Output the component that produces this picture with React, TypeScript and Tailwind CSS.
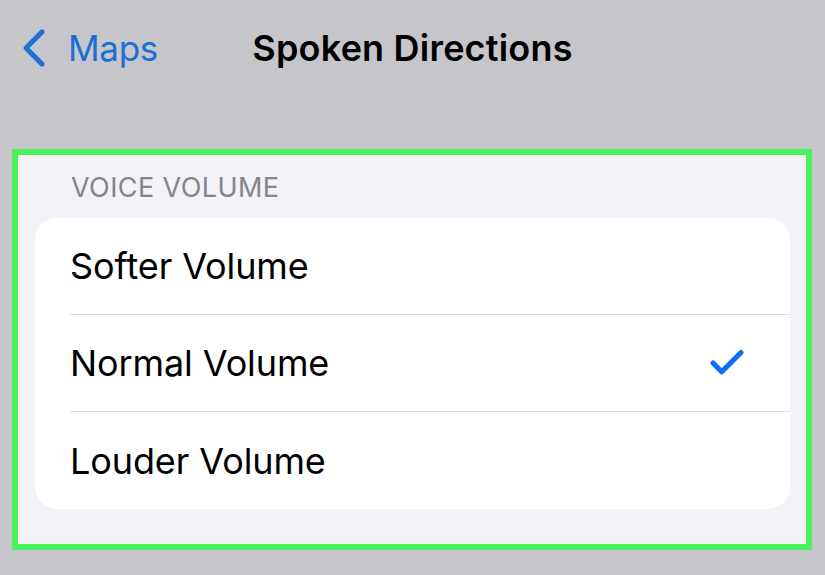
import { Check } from "lucide-react"

const options = [
  { id: "softer", label: "Softer Volume", selected: false },
  { id: "normal", label: "Normal Volume", selected: true },
  { id: "louder", label: "Louder Volume", selected: false },
]

export default function App() {
  return (
    <div
      className="w-[825px] h-[575px] bg-[#c6c5ca] overflow-hidden"
      style={{ fontFamily: "Inter, 'Noto Sans', sans-serif" }}
    >
      {/* nav bar */}
      <div className="relative h-[96px] flex items-center">
        <div className="flex items-center pl-[18px] text-[#1b6fd6]">
          <svg width="30" height="42" viewBox="0 0 30 42" fill="none">
            <path d="M24 5 L8 21 L24 37" stroke="currentColor" strokeWidth="5" strokeLinecap="round" strokeLinejoin="round" />
          </svg>
          <span className="ml-[20px] text-[35px] leading-none tracking-[-0.3px]">Maps</span>
        </div>
        <div className="absolute left-0 right-0 top-0 h-[96px] flex items-center justify-center pointer-events-none">
          <span className="ml-[0px] text-[36px] font-semibold leading-none text-black tracking-[0.2px]">Spoken Directions</span>
        </div>
      </div>

      {/* highlighted section */}
      <div className="mt-[53px] ml-[12px] w-[800px] h-[401px] border-[6px] border-[#4bf25a] bg-[#f2f2f7] pt-[18px] px-[17px]">
        <div className="pl-[36px] text-[27px] leading-[30px] text-[#85858a] tracking-[0.4px]">VOICE VOLUME</div>
        <div className="mt-[15px] bg-white rounded-[22px] w-[755px]">
          {options.map((option, i) => (
            <div key={option.id} className="pl-[35px]">
              <div
                className={`h-[97px] flex items-center justify-between pr-[42px] ${
                  i < options.length - 1 ? "border-b border-[#dcdce0]" : ""
                }`}
              >
                <span className="text-[36px] text-black tracking-[-0.1px]">{option.label}</span>
                {option.selected && <Check className="w-[42px] h-[42px] text-[#0d6ff5]" strokeWidth={3} />}
              </div>
            </div>
          ))}
        </div>
      </div>
    </div>
  )
}
